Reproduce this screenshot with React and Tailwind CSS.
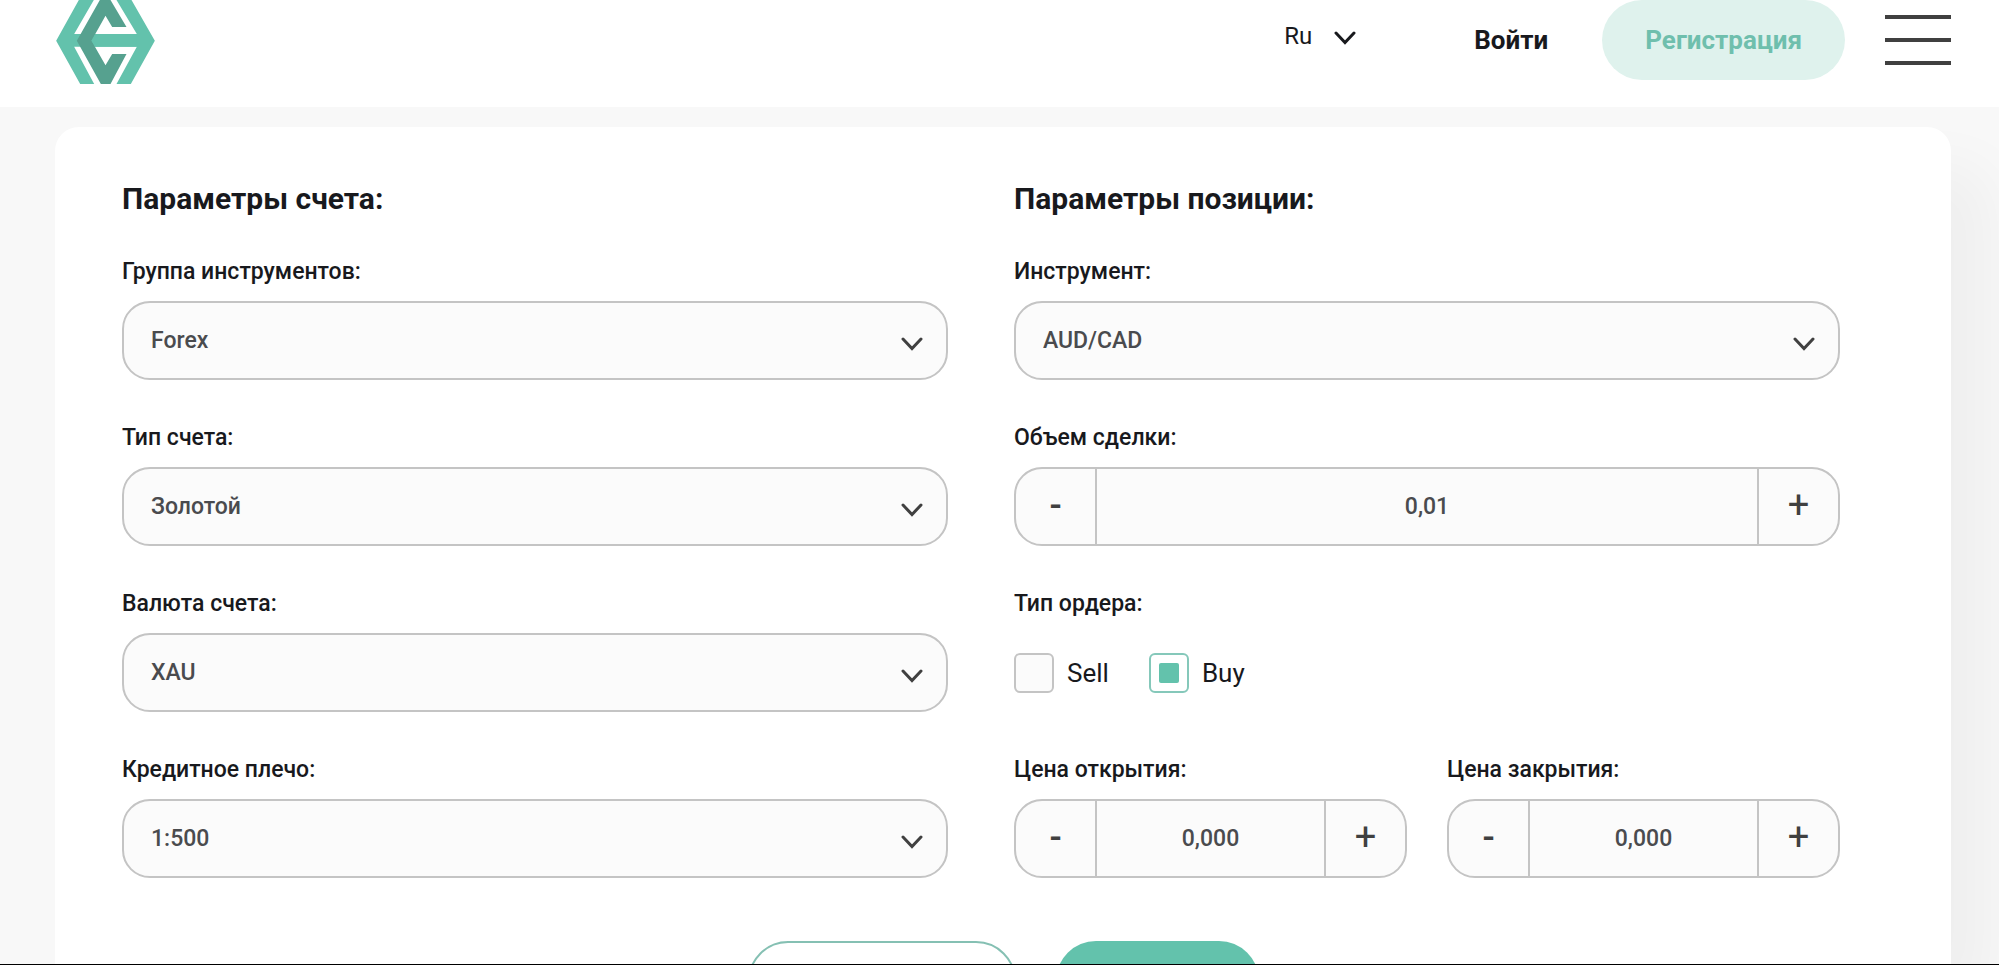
import { useState } from "react";

function LogoMark() {
  return (
    <svg viewBox="0 0 296 252" className="h-[84px] w-[99px]" aria-hidden="true">
      <polygon fill="#63c2ac" points="68,0 113,0 54,102 242,102 181,0 226,0 296,122 224,252 181,252 242,140 54,140 114,252 72,252 0,122" />
      <polygon fill="#56a18f" points="131,0 163,0 211,81 168,81 148,47 106,122 148,196 168,162 211,162 163,252 134,252 62,122" />
      <polygon fill="#63c2ac" points="117,102 242,102 242,140 117,140 106,122" />
    </svg>
  );
}

function Chevron({ className }) {
  return (
    <svg viewBox="0 0 22 14" className={className} fill="none" stroke="currentColor" strokeWidth="3" strokeLinecap="round" strokeLinejoin="miter" aria-hidden="true">
      <path d="M2 2 L11 11.500 L20 2" />
    </svg>
  );
}

function Label({ id, children }) {
  return (
    <label htmlFor={id} className="block text-[23px] font-medium leading-8 text-[#18191d]">
      {children}
    </label>
  );
}

function SelectField({ id, label, value }) {
  return (
    <div className="flex flex-col gap-[13px]">
      <Label id={id}>{label}</Label>
      <div className="relative">
        <select id={id} className="block h-[79px] w-full appearance-none rounded-[28px] border-2 border-[#c4c4c4] bg-[#fbfbfb] px-[27px] pt-0.5 text-[23px] font-medium text-[#4a4b4e]">
          <option>{value}</option>
        </select>
        <Chevron className="pointer-events-none absolute top-9 right-[25px] h-[14px] w-[22px] text-[#404040]" />
      </div>
    </div>
  );
}

function Stepper({ id, label, initial, step, digits }) {
  const [value, setValue] = useState(initial);
  const format = (n) => Math.max(0, n).toFixed(digits).replace(".", ",");
  const change = (delta) => setValue(format(parseFloat(value.replace(",", ".")) + delta));
  return (
    <div className="flex min-w-0 flex-1 flex-col gap-[13px]">
      <Label id={id}>{label}</Label>
      <div className="flex h-[79px] overflow-hidden rounded-[28px] border-2 border-[#c4c4c4] bg-[#fbfbfb] text-[#4a4b4e]">
        <button type="button" aria-label="Уменьшить" onClick={() => change(-step)} className="w-[81px] shrink-0 border-r-2 border-[#c4c4c4] pb-0.5 text-4xl font-medium text-[#404040]">-</button>
        <input id={id} value={value} onChange={(e) => setValue(e.target.value)} className="min-w-0 flex-1 bg-transparent pt-0.5 text-center text-[23px] font-medium outline-none" />
        <button type="button" aria-label="Увеличить" onClick={() => change(step)} className="w-[81px] shrink-0 border-l-2 border-[#c4c4c4] pb-0.5 text-[38px] text-[#404040]">+</button>
      </div>
    </div>
  );
}

function OrderOption({ value, selected, onSelect }) {
  return (
    <label className="flex items-center gap-[13px] text-[26px] leading-8 text-[#18191d]">
      <span className="grid size-10 place-items-center">
        <input
          type="radio"
          name="order"
          checked={selected}
          onChange={() => onSelect(value)}
          className="col-start-1 row-start-1 size-10 appearance-none rounded-md border-2 border-[#c4c4c4] bg-[#fbfbfb] checked:border-[#85c8ba] checked:bg-white"
        />
        {selected && <span className="pointer-events-none col-start-1 row-start-1 size-5 rounded-xs bg-[#63c2ac]" />}
      </span>
      {value}
    </label>
  );
}

export default function App() {
  const [order, setOrder] = useState("Buy");
  return (
    <div className="flex h-screen flex-col overflow-hidden border-b border-black bg-[#f8f8f8] font-[Roboto,sans-serif]">
      <header className="flex h-[107px] shrink-0 items-start bg-white pr-12 pl-14">
        <a href="#home" aria-label="Главная"><LogoMark /></a>
        <div className="ml-auto flex items-start">
          <button type="button" className="mt-5 mr-[118px] flex items-center gap-[22px] text-2xl leading-8 text-[#18191d]">
            Ru
            <Chevron className="mt-1 h-[14px] w-[22px]" />
          </button>
          <a href="#login" className="mt-6 mr-[54px] text-[26px] font-bold leading-8 text-[#18191d]">Войти</a>
          <a href="#register" className="mr-10 flex h-20 items-center rounded-full bg-[#dff2ed] px-[43px] text-[26px] font-bold text-[#6fbfad]">Регистрация</a>
          <button type="button" aria-label="Меню" className="mt-[15px] flex w-[66px] flex-col gap-[19px]">
            <span className="h-1 w-full bg-[#404040]" />
            <span className="h-1 w-full bg-[#404040]" />
            <span className="h-1 w-full bg-[#404040]" />
          </button>
        </div>
      </header>
      <main className="mt-5 mr-12 ml-[55px] min-h-0 flex-1 rounded-t-3xl bg-white pt-[52px] shadow-[40px_40px_60px_rgba(0,0,0,0.04)]">
        <form>
          <div className="grid grid-cols-2 gap-x-[66px] pr-[111px] pl-[67px]">
            <section>
              <h2 className="text-[30px] font-bold leading-10 text-[#18191d]">Параметры счета:</h2>
              <div className="mt-[37px] flex flex-col gap-[42px]">
                <SelectField id="group" label="Группа инструментов:" value="Forex" />
                <SelectField id="account" label="Тип счета:" value="Золотой" />
                <SelectField id="currency" label="Валюта счета:" value="XAU" />
                <SelectField id="leverage" label="Кредитное плечо:" value="1:500" />
              </div>
            </section>
            <section>
              <h2 className="text-[30px] font-bold leading-10 text-[#18191d]">Параметры позиции:</h2>
              <div className="mt-[37px] flex flex-col gap-[42px]">
                <SelectField id="instrument" label="Инструмент:" value="AUD/CAD" />
                <Stepper id="volume" label="Объем сделки:" initial="0,01" step={0.01} digits={2} />
                <fieldset>
                  <legend className="mb-[13px] text-[23px] font-medium leading-8 text-[#18191d]">Тип ордера:</legend>
                  <div className="flex h-[79px] items-center gap-10">
                    <OrderOption value="Sell" selected={order === "Sell"} onSelect={setOrder} />
                    <OrderOption value="Buy" selected={order === "Buy"} onSelect={setOrder} />
                  </div>
                </fieldset>
                <div className="flex gap-10">
                  <Stepper id="open" label="Цена открытия:" initial="0,000" step={0.001} digits={3} />
                  <Stepper id="close" label="Цена закрытия:" initial="0,000" step={0.001} digits={3} />
                </div>
              </div>
            </section>
          </div>
          <div className="mt-[63px] flex justify-center gap-10">
            <button type="reset" aria-label="Сбросить" className="h-20 w-[268px] rounded-full border-2 border-[#85c0b3] bg-white" />
            <button type="submit" aria-label="Рассчитать" className="h-20 w-[203px] rounded-full bg-[#63c2ac]" />
          </div>
        </form>
      </main>
    </div>
  );
}
